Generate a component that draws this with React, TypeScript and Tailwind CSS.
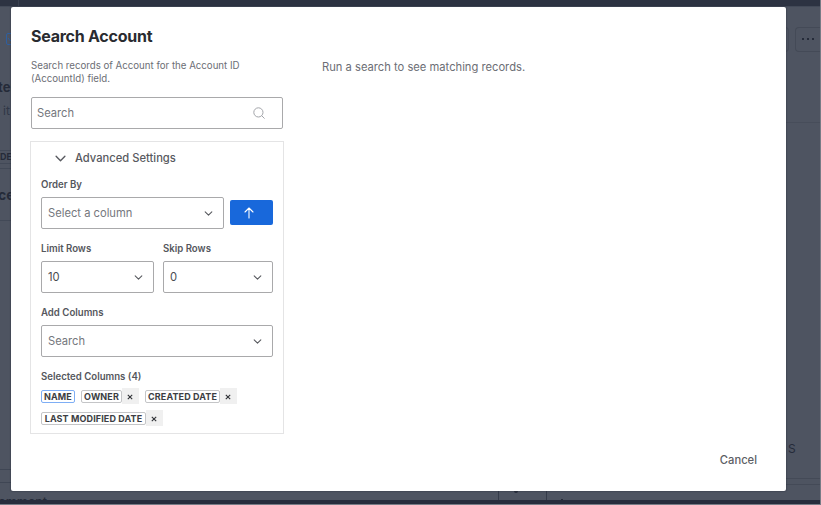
import type { ReactNode } from 'react'

interface SelectBoxProps {
  value: string
  placeholder?: boolean
  className?: string
}

interface TagProps {
  label: string
  active?: boolean
  className: string
}

function ChevronIcon({ className = '' }: { className?: string }) {
  return (
    <svg viewBox="0 0 10 6" fill="none" stroke="currentColor" className={className}>
      <path d="M1 1l4 4 4-4" strokeWidth="1.25" strokeLinecap="round" strokeLinejoin="round" />
    </svg>
  )
}

function SelectBox({ value, placeholder = false, className = '' }: SelectBoxProps) {
  return (
    <button
      type="button"
      className={`flex h-8 items-center justify-between rounded-[2px] border border-[#a9a9ab] bg-white pl-[6px] pr-[10px] text-left text-[11.2px] ${
        placeholder ? 'text-[#75777d]' : 'text-[#494b50]'
      } ${className}`}
    >
      {value}
      <ChevronIcon className="h-[5px] w-[9px] text-[#55575c]" />
    </button>
  )
}

function Field({ label, className = '', children }: { label: string; className?: string; children: ReactNode }) {
  return (
    <div className={className}>
      <div className="mb-1 h-[17px] pt-px text-[9.65px] leading-4 font-semibold text-[#55575d]">{label}</div>
      {children}
    </div>
  )
}

function Tag({ label, active = false, className }: TagProps) {
  return (
    <div className="flex h-4 items-center">
      <span
        className={`flex h-[13px] items-center justify-center rounded-[2px] border text-[9px] leading-none font-bold tracking-[0.12px] whitespace-nowrap text-[#3c3e43] ${
          active ? 'border-[#7eaef5]' : 'border-[#c4c5c7]'
        } ${className}`}
      >
        {label}
      </span>
      {!active && (
        <button type="button" className="flex h-4 w-[17px] items-center justify-center bg-[#f0f0f0] pr-px">
          <svg viewBox="0 0 6 6" className="mt-px h-[6px] w-[6px]" fill="none" stroke="#2f3136">
            <path d="M.8.8l4.4 4.4M5.2.8L.8 5.2" strokeWidth="1.1" />
          </svg>
        </button>
      )}
    </div>
  )
}

function PageBehind() {
  return (
    <div className="flex h-full flex-col text-[#252b39]">
      <div className="h-[7px] shrink-0 border-b border-[#434a58] bg-[#2d3342]">
        <div className="ml-[18px] h-full border-l border-[#3a4150]" />
      </div>
      <div className="flex h-[484px] shrink-0 justify-between">
        <div className="flex w-[30px] flex-col items-start whitespace-nowrap">
          <div className="mt-[26px] ml-[6px] flex h-3 w-3 shrink-0 items-center rounded-[2px] border border-[#2f5f9f]">
            <svg viewBox="0 0 8 6" className="h-[6px] w-2" fill="none" stroke="#2f5f9f">
              <path d="M1 2l2.5 3L7 1" />
            </svg>
          </div>
          <span className="mt-[32px] -ml-[2px] h-5 text-[13px] leading-5 font-bold">ter</span>
          <span className="mt-1 ml-[3px] h-5 text-[12px] leading-5 text-[#303746]">it</span>
          <span className="mt-[29px] flex h-[14px] w-full items-center border-y border-[#424957] text-[9px] font-bold">DE</span>
          <div className="mt-[4px] h-px w-full shrink-0 bg-[#424957]" />
          <span className="mt-[14px] -ml-[2px] h-6 text-[14px] leading-6 font-bold">ce</span>
          <div className="mt-[13px] h-px w-full shrink-0 bg-[#424957]" />
          <div className="mt-[248px] h-[14px] w-full shrink-0 border-y border-[#3f4654]" />
        </div>
        <div className="flex w-[35px] flex-col">
          <div className="mt-[20px] flex h-[25px] shrink-0 justify-between">
            <div className="w-1 rounded-r border border-l-0 border-[#464c59]" />
            <div className="flex w-[25px] items-center gap-[3px] rounded-l border border-r-0 border-[#444a57] pb-px pl-[6px]">
              <span className="h-[2px] w-[2px] bg-[#252b39]" />
              <span className="h-[2px] w-[2px] bg-[#252b39]" />
              <span className="h-[2px] w-[2px] bg-[#252b39]" />
            </div>
          </div>
          <div className="mt-[70px] h-px shrink-0 bg-[#474d5a]" />
          <span className="mt-[316px] ml-[3px] h-5 text-[12px] leading-5">S</span>
          <div className="mt-[19px] h-[7px] shrink-0 border-y border-[#444a57]" />
        </div>
      </div>
      <div className="flex h-[9px] shrink-0 overflow-hidden text-[12.5px] leading-[18px] font-medium">
        <span className="-ml-[9px] w-[507px] pt-[2px]">comment</span>
        <div className="flex w-[49px] justify-center border-x border-[#343b49]">
          <div className="-ml-[14px] h-[2px] w-1 rounded-b bg-[#252b39]" />
        </div>
        <div className="mt-2 ml-[14px] h-px w-[2px] bg-[#252b39]" />
      </div>
      <div className="h-1 shrink-0 bg-[#272d3d]" />
      <div className="h-px shrink-0 bg-[#777c86]" />
    </div>
  )
}

function SearchDialog() {
  return (
    <div
      role="dialog"
      className="absolute top-[7px] left-[11px] flex h-[484px] w-[775px] flex-col rounded-[2px] bg-white pt-[17px] pr-[29px] pl-[19px] shadow-[0_0_1px_1px_rgba(30,36,50,0.25)]"
    >
      <h1 className="ml-px text-[16px] leading-6 font-bold tracking-[-0.25px] text-[#292b30]">Search Account</h1>

      <div className="mt-[11px] flex">
        <div className="w-[254px]">
          <p className="ml-px pt-px text-[9.68px] leading-[12.5px] text-[#6c6e75]">
            Search records of Account for the Account ID
            <br />
            (AccountId) field.
          </p>
          <div className="mt-3 ml-px flex h-8 w-[252px] items-center justify-between rounded-[2px] border border-[#a9a9ab] pr-[17px] pl-[5px] text-[11.2px] text-[#75777d]">
            Search
            <svg viewBox="0 0 12 12" className="h-3 w-3" fill="none" stroke="#a2a4a9">
              <circle cx="5.4" cy="5.4" r="4.6" />
              <path d="M8.8 8.8l2.5 2.5" strokeLinecap="round" />
            </svg>
          </div>

          <div className="mt-3 h-[293px] border border-[#e4e4e5] px-[10px]">
            <div className="flex h-[34px] items-center pb-px pl-[14px] text-[11.2px] font-medium text-[#585a60]">
              <ChevronIcon className="mr-[9px] h-[7px] w-[11px]" />
              Advanced Settings
            </div>
            <Field label="Order By">
              <div className="flex items-center justify-between">
                <SelectBox value="Select a column" placeholder className="w-[183px]" />
                <button type="button" className="mb-px flex h-[25px] w-[43px] items-center rounded-[2px] bg-[#1868db] pl-[14px]">
                  <svg viewBox="0 0 10 12" className="h-3 w-[10px]" fill="none" stroke="#fff">
                    <path d="M5 11V1M1 5l4-4 4 4" strokeWidth="1.1" strokeLinecap="round" strokeLinejoin="round" />
                  </svg>
                </button>
              </div>
            </Field>
            <div className="mt-[11px] flex justify-between">
              <Field label="Limit Rows" className="w-[113px]">
                <SelectBox value="10" className="w-full" />
              </Field>
              <Field label="Skip Rows" className="w-[110px]">
                <SelectBox value="0" className="w-full" />
              </Field>
            </div>
            <Field label="Add Columns" className="mt-[11px]">
              <SelectBox value="Search" placeholder className="w-full" />
            </Field>
            <Field label="Selected Columns (4)" className="mt-[11px]">
              <div className="-mt-px flex flex-wrap gap-x-[6px] gap-y-[6px]">
                <Tag label="NAME" active className="w-[34px]" />
                <Tag label="OWNER" className="w-[41px]" />
                <Tag label="CREATED DATE" className="w-[75px]" />
                <Tag label="LAST MODIFIED DATE" className="w-[105px]" />
              </div>
            </Field>
          </div>
        </div>
        <p className="ml-[38px] text-[11.2px] leading-4 text-[#6c6e75]">Run a search to see matching records.</p>
      </div>

      <div className="mt-4 flex justify-end">
        <button type="button" className="text-[11.2px] leading-5 font-medium text-[#5c5e64]">
          Cancel
        </button>
      </div>
    </div>
  )
}

export default function App() {
  return (
    <div className="relative h-[505px] w-[821px] overflow-hidden border-r border-[#777c86] bg-[#4e5461] font-['Inter',sans-serif]">
      <PageBehind />
      <SearchDialog />
    </div>
  )
}
